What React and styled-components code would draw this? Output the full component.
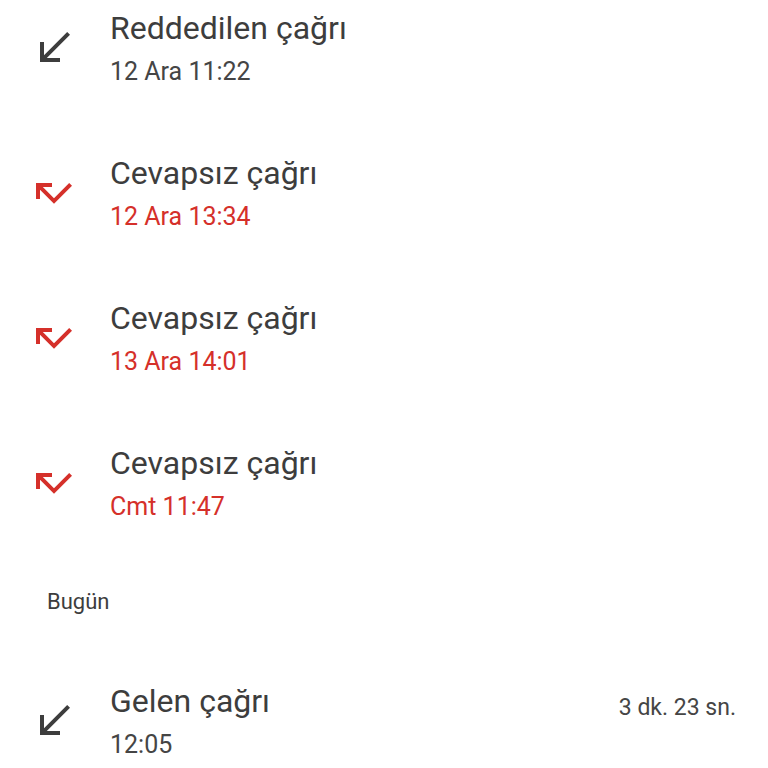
import React from "react";
import styled, { createGlobalStyle } from "styled-components";

const GlobalStyle = createGlobalStyle`
  body {
    margin: 0;
    background: #ffffff;
    font-family: Roboto, "Noto Sans", sans-serif;
  }
`;

const Colors = {
  text: "#3d3d3d",
  subText: "#454545",
  missed: "#d5302a",
};

// Styled Components
const Page = styled.div`
  width: 768px;
  height: 768px;
  overflow: hidden;
  background: #fff;
`;

const List = styled.div`
  display: flex;
  flex-direction: column;
  margin-top: -24px;
`;

const Row = styled.div`
  display: flex;
  align-items: center;
  height: 145px;
  padding: 0 32px 0 30px;
  box-sizing: border-box;
`;

const IconWrapper = styled.div`
  width: 48px;
  height: 48px;
  margin-right: 32px;
  margin-top: -2px;
  display: flex;
  align-items: center;
  justify-content: center;
  color: ${(p) => (p.$missed ? Colors.missed : Colors.text)};
`;

const TextBlock = styled.div`
  flex: 1;
  display: flex;
  flex-direction: column;
  gap: 6px;
`;

const Title = styled.div`
  font-size: 32px;
  line-height: 40px;
  color: ${Colors.text};
`;

const Subtitle = styled.div`
  font-size: 25px;
  line-height: 36px;
  color: ${(p) => (p.$missed ? Colors.missed : Colors.subText)};
`;

const Duration = styled.div`
  align-self: flex-start;
  margin-top: 44px;
  font-size: 23px;
  line-height: 30px;
  color: ${Colors.subText};
`;

const SectionHeader = styled.div`
  height: 93px;
  display: flex;
  align-items: center;
  padding-left: 47px;
  padding-bottom: 2px;
  box-sizing: border-box;
  font-size: 22px;
  color: ${Colors.text};
`;

const ReceivedIcon = () => (
  <svg width="48" height="48" viewBox="0 0 24 24" fill="currentColor">
    <path d="M20 5.41L18.59 4 7 15.59V9H5v10h10v-2H8.41z" />
  </svg>
);

const MissedIcon = () => (
  <svg width="48" height="48" viewBox="0 0 24 24" fill="currentColor">
    <path d="M19.59 7L12 14.59 6.41 9H11V7H3v8h2v-4.59l7 7 9-9z" />
  </svg>
);

const calls = [
  { type: "received", title: "Reddedilen çağrı", time: "12 Ara 11:22" },
  { type: "missed", title: "Cevapsız çağrı", time: "12 Ara 13:34" },
  { type: "missed", title: "Cevapsız çağrı", time: "13 Ara 14:01" },
  { type: "missed", title: "Cevapsız çağrı", time: "Cmt 11:47" },
];

const today = [
  { type: "received", title: "Gelen çağrı", time: "12:05", duration: "3 dk. 23 sn." },
];

const CallRow = ({ call }) => {
  const missed = call.type === "missed";
  return (
    <Row>
      <IconWrapper $missed={missed}>
        {missed ? <MissedIcon /> : <ReceivedIcon />}
      </IconWrapper>
      <TextBlock>
        <Title>{call.title}</Title>
        <Subtitle $missed={missed}>{call.time}</Subtitle>
      </TextBlock>
      {call.duration && <Duration>{call.duration}</Duration>}
    </Row>
  );
};

const App = () => {
  return (
    <Page>
      <GlobalStyle />
      <List>
        {calls.map((c, i) => (
          <CallRow key={i} call={c} />
        ))}
        <SectionHeader>Bugün</SectionHeader>
        {today.map((c, i) => (
          <CallRow key={i} call={c} />
        ))}
      </List>
    </Page>
  );
};

export default App;
